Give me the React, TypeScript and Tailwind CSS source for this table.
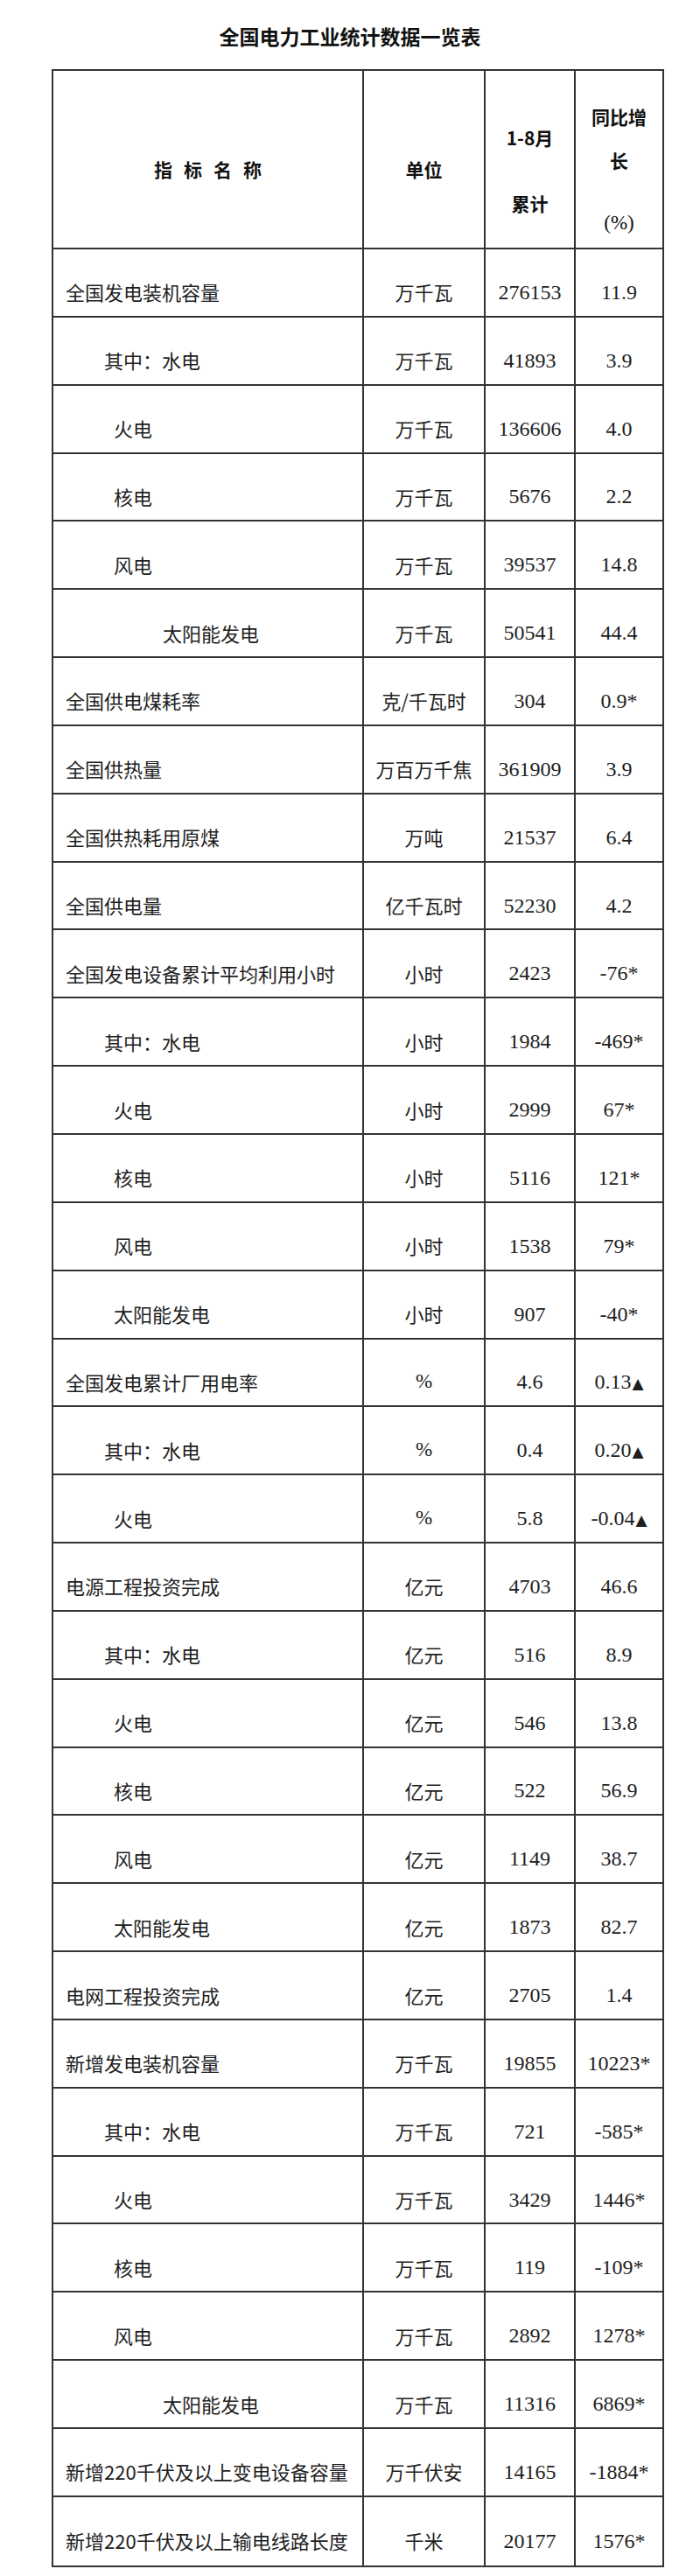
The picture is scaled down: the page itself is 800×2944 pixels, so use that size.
const ROWS: [string, number, string, string, string][] = [
  ["全国发电装机容量", 0, "万千瓦", "276153", "11.9"],
  ["其中：水电", 1, "万千瓦", "41893", "3.9"],
  ["火电", 2, "万千瓦", "136606", "4.0"],
  ["核电", 2, "万千瓦", "5676", "2.2"],
  ["风电", 2, "万千瓦", "39537", "14.8"],
  ["太阳能发电", 3, "万千瓦", "50541", "44.4"],
  ["全国供电煤耗率", 0, "克/千瓦时", "304", "0.9*"],
  ["全国供热量", 0, "万百万千焦", "361909", "3.9"],
  ["全国供热耗用原煤", 0, "万吨", "21537", "6.4"],
  ["全国供电量", 0, "亿千瓦时", "52230", "4.2"],
  ["全国发电设备累计平均利用小时", 0, "小时", "2423", "-76*"],
  ["其中：水电", 1, "小时", "1984", "-469*"],
  ["火电", 2, "小时", "2999", "67*"],
  ["核电", 2, "小时", "5116", "121*"],
  ["风电", 2, "小时", "1538", "79*"],
  ["太阳能发电", 2, "小时", "907", "-40*"],
  ["全国发电累计厂用电率", 0, "%", "4.6", "0.13▲"],
  ["其中：水电", 1, "%", "0.4", "0.20▲"],
  ["火电", 2, "%", "5.8", "-0.04▲"],
  ["电源工程投资完成", 0, "亿元", "4703", "46.6"],
  ["其中：水电", 1, "亿元", "516", "8.9"],
  ["火电", 2, "亿元", "546", "13.8"],
  ["核电", 2, "亿元", "522", "56.9"],
  ["风电", 2, "亿元", "1149", "38.7"],
  ["太阳能发电", 2, "亿元", "1873", "82.7"],
  ["电网工程投资完成", 0, "亿元", "2705", "1.4"],
  ["新增发电装机容量", 0, "万千瓦", "19855", "10223*"],
  ["其中：水电", 1, "万千瓦", "721", "-585*"],
  ["火电", 2, "万千瓦", "3429", "1446*"],
  ["核电", 2, "万千瓦", "119", "-109*"],
  ["风电", 2, "万千瓦", "2892", "1278*"],
  ["太阳能发电", 3, "万千瓦", "11316", "6869*"],
  ["新增220千伏及以上变电设备容量", 0, "万千伏安", "14165", "-1884*"],
  ["新增220千伏及以上输电线路长度", 0, "千米", "20177", "1576*"],
];

// indent of the name column, by level
const INDENT = ["pl-[14px]", "pl-[58px]", "pl-[69px]", "pl-[125px]"];

const CJK = "font-['Noto_Sans_CJK_SC',sans-serif]";
const SERIF = "font-['Liberation_Serif','Noto_Sans_CJK_SC',serif]";

function Change({ v }: { v: string }) {
  if (v.endsWith("▲")) {
    return (
      <span>
        {v.slice(0, -1)}
        <span className="font-['DejaVu_Sans',sans-serif] text-[17px] ml-[1px]">▲</span>
      </span>
    );
  }
  return <span>{v}</span>;
}

export default function App() {
  return (
    <div className="w-[800px] min-h-[2944px] bg-white text-[#1e1e1e]">
      {/* Title */}
      <div className={`h-[79px] flex items-center justify-center pt-[3px] ${CJK} text-[23px] font-bold text-[#111]`}>
        全国电力工业统计数据一览表
      </div>

      <div className="ml-[59px] w-[700px] border-2 border-[#333]">
        {/* Header */}
        <div className={`grid grid-cols-[355px_139px_103px_99px] h-[204px] border-b-2 border-[#333] ${CJK} font-bold text-[21px] text-[#111]`}>
          <div className="border-r-2 border-[#333] flex items-center justify-center pt-6">
            <span className="tracking-[13px] ml-[13px]">指标名称</span>
          </div>
          <div className="border-r-2 border-[#333] flex items-center justify-center pt-6">单位</div>
          <div className="border-r-2 border-[#333] flex flex-col items-center justify-center pt-6 gap-[45px]">
            <div className="h-[30px] leading-[30px]">1-8月</div>
            <div className="h-[30px] leading-[30px]">累计</div>
          </div>
          <div className="flex flex-col items-center justify-center pt-6">
            <div className="h-[30px] leading-[30px]">同比增</div>
            <div className="h-[30px] leading-[30px] mt-[20px]">长</div>
            <div className={`h-[30px] leading-[30px] mt-[42px] ${SERIF} font-normal text-[23px]`}>(%)</div>
          </div>
        </div>

        {/* Data rows */}
        {ROWS.map(([name, level, unit, total, change], i) => (
          <div
            key={i}
            className={`grid grid-cols-[355px_139px_103px_99px] h-[77.85px] ${i < ROWS.length - 1 ? "border-b-2 border-[#333]" : ""}`}
          >
            <div className={`border-r-2 border-[#333] flex items-center pt-[22px] ${INDENT[level]} ${CJK} text-[22px] whitespace-nowrap`}>
              {name}
            </div>
            <div className={`border-r-2 border-[#333] flex items-center justify-center pt-[22px] whitespace-nowrap ${unit === "%" ? `${SERIF} text-[23px]` : `${CJK} text-[22px]`}`}>
              {unit}
            </div>
            <div className={`border-r-2 border-[#333] flex items-center justify-center pt-[22px] ${SERIF} text-[24px]`}>
              {total}
            </div>
            <div className={`flex items-center justify-center pt-[22px] ${SERIF} text-[24px] whitespace-nowrap`}>
              <Change v={change} />
            </div>
          </div>
        ))}
      </div>
    </div>
  );
}
